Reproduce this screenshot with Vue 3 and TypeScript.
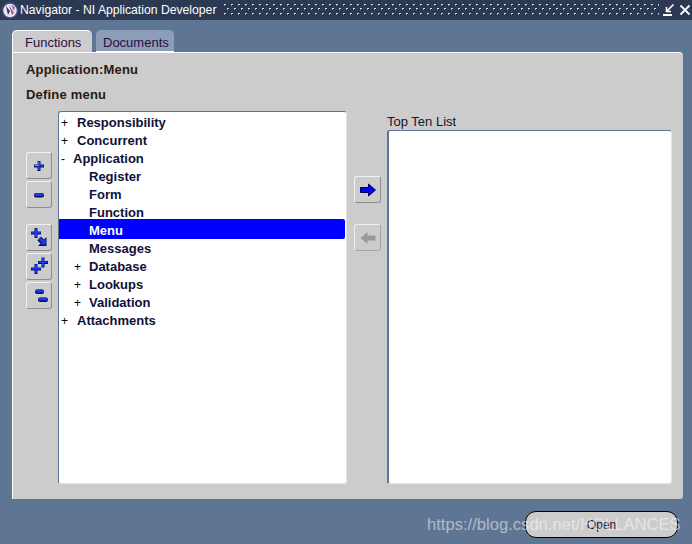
<script setup lang="ts">
interface Row { label: string; indent: number; mark: string; selected?: boolean }
const rows: Row[] = [
  { label: 'Responsibility', indent: 0, mark: '+' },
  { label: 'Concurrent', indent: 0, mark: '+' },
  { label: 'Application', indent: 0, mark: '-' },
  { label: 'Register', indent: 1, mark: '' },
  { label: 'Form', indent: 1, mark: '' },
  { label: 'Function', indent: 1, mark: '' },
  { label: 'Menu', indent: 1, mark: '', selected: true },
  { label: 'Messages', indent: 1, mark: '' },
  { label: 'Database', indent: 1, mark: '+' },
  { label: 'Lookups', indent: 1, mark: '+' },
  { label: 'Validation', indent: 1, mark: '+' },
  { label: 'Attachments', indent: 0, mark: '+' },
]
</script>

<template>
  <div class="app">
    <header class="titlebar">
      <svg class="logo" width="18" height="18" viewBox="0 0 18 18">
        <circle cx="9" cy="9.500" r="7.500" fill="#e6e6f2" stroke="#4a4a78" stroke-width="1.500" />
        <path d="M5 5 L9 10 L7 14 Z" fill="#3d2f86" />
        <path d="M8 4 L13 12 L11 14 Z" fill="#c04a78" />
        <path d="M10 4 L14 6 L13 10 Z" fill="#8a6cc0" />
      </svg>
      <span class="title">Navigator - NI Application Developer</span>
      <svg class="stipple" width="435" height="12">
        <defs>
          <pattern id="stip" width="7" height="9" patternUnits="userSpaceOnUse">
            <rect x="0" y="0" width="2" height="1" fill="#d5dbe4" />
            <rect x="0" y="1" width="1" height="1" fill="#8f9bb0" />
            <rect x="1" y="1" width="1" height="1" fill="#0c1424" />
            <rect x="3" y="4" width="2" height="1" fill="#d5dbe4" />
            <rect x="3" y="5" width="1" height="1" fill="#8f9bb0" />
            <rect x="4" y="5" width="1" height="1" fill="#0c1424" />
          </pattern>
        </defs>
        <rect width="435" height="12" fill="url(#stip)" />
      </svg>
      <svg class="winicon" width="14" height="14" viewBox="0 0 14 14">
        <path d="M10.500 1.500 L4 8 M3.500 4 V8.500 H8" stroke="#fff" stroke-width="1.600" fill="none" />
        <path d="M0 12 H9" stroke="#fff" stroke-width="2" />
      </svg>
      <svg class="winicon" width="12" height="12" viewBox="0 0 12 12">
        <path d="M1.500 1.500 L10.500 10.500 M10.500 1.500 L1.500 10.500" stroke="#fff" stroke-width="1.800" />
      </svg>
    </header>

    <main class="main">
      <nav class="tabs">
        <div class="tab active">Functions</div>
        <div class="tab">Documents</div>
      </nav>

      <section class="panel">
        <div class="heading first">Application:Menu</div>
        <div class="heading second">Define menu</div>

        <div class="workspace">
          <div class="toolcol">
            <button class="tool">
              <svg width="14" height="14" viewBox="0 0 14 14"><path class="sh" d="M5.500 2h3v3.500H12v3H8.500V12h-3V8.500H2v-3h3.500z" /><path class="bl" d="M6 2.500h2V6h3.500v1.500H8v3.500H6V7.500H2.500V6H6z" /><path class="hi" d="M6 6.500h-3M6 3v3" /></svg>
            </button>
            <button class="tool">
              <svg width="14" height="14" viewBox="0 0 14 14"><rect class="sh" x="2" y="5" width="10" height="4.500" rx="2" /><rect class="bl" x="2.500" y="5" width="9" height="3" rx="1.500" /></svg>
            </button>
            <button class="tool gap">
              <svg width="22" height="22" viewBox="0 0 22 22">
                <g transform="translate(1.500 -1)">
                  <path class="sh" d="M5 2h3v3.500h3.500v3H8V12H5V8.500H1.500v-3H5z" />
                  <path class="bl" d="M5.500 2.500h2V6H11v1.500H7.500V11h-2V7.500H2V6h3.500z" />
                </g>
                <path class="sh" d="M11 11.500l2-2 3 3 2.500-2.500v9h-8.500l2.500-2.500-3-3z" />
                <path class="bl" d="M11.800 11.700l1.200-1.200 3 3 1.800-1.800v5.800h-5.800l1.800-1.800-3-3z" />
              </svg>
            </button>
            <button class="tool">
              <svg width="22" height="22" viewBox="0 0 22 22">
                <g transform="translate(1 -.5)">
                  <path class="sh" d="M12.500 2h3v3.500H19v3h-3.500V12h-3V8.500H9v-3h3.500z" />
                  <path class="bl" d="M13 2.500h2V6h3.500v1.500H15V11h-2V7.500H9.500V6H13z" />
                </g>
                <g transform="translate(1.500 -1.500)">
                  <path class="sh" d="M5 9.500h3V13h3.500v3H8v3.500H5V16H1.500v-3H5z" />
                  <path class="bl" d="M5.500 10h2v3.500H11V15H7.500v3.500h-2V15H2v-1.500h3.500z" />
                </g>
              </svg>
            </button>
            <button class="tool">
              <svg width="22" height="22" viewBox="0 0 22 22">
                <rect class="sh" x="7" y="4.500" width="9" height="4.500" rx="2" />
                <rect class="bl" x="7.500" y="4.500" width="8" height="3" rx="1.500" />
                <rect class="sh" x="10" y="12.500" width="10" height="4.500" rx="2" />
                <rect class="bl" x="10.500" y="12.500" width="9" height="3" rx="1.500" />
              </svg>
            </button>
          </div>

          <div class="tree">
            <div
              v-for="row in rows"
              :key="row.label"
              class="row"
              :class="{ selected: row.selected, nested: row.indent === 1, expanded: row.mark === '-' }"
            >
              <span class="mark">{{ row.mark }}</span>
              <span class="label">{{ row.label }}</span>
            </div>
          </div>

          <div class="movecol">
            <button class="tool">
              <svg width="20" height="18" viewBox="0 0 20 18"><path fill="#0000ff" stroke="#000050" d="M2.500 6.500h8V3l7 6-7 6v-3.500h-8z" /></svg>
            </button>
            <button class="tool disabled">
              <svg width="20" height="18" viewBox="0 0 20 18"><path fill="#999" d="M17.500 6.500h-8V3l-7 6 7 6v-3.500h8z" /></svg>
            </button>
          </div>

          <div class="rightcol">
            <div class="listlabel">Top Ten List</div>
            <div class="list"></div>
          </div>
        </div>
      </section>

      <footer class="footer">
        <button class="open">Open</button>
      </footer>
    </main>
    <div class="watermark">https://blog.csdn.net/HOLLANCES</div>
  </div>
</template>

<style>
html, body { margin: 0; background: #5f7594; }
</style>

<style scoped>
.app {
  position: relative;
  width: 692px;
  height: 544px;
  overflow: hidden;
  display: flex;
  flex-direction: column;
  background: #5f7594;
  font-family: "Liberation Sans", Arial, sans-serif;
}
.titlebar {
  height: 20px;
  background: #2b3a52;
  display: flex;
  align-items: center;
  padding: 0 3px 0 1px;
  box-sizing: border-box;
  flex: none;
}
.logo { flex: none; }
.title {
  margin-left: 1px;
  color: #fff;
  font-size: 12.2px;
  white-space: nowrap;
  width: 204px;
  flex: none;
}
.stipple { flex: none; margin-right: 2px; }
.winicon { flex: none; margin-left: 2px; }
.main {
  flex: 1;
  display: flex;
  flex-direction: column;
  padding: 10px 9px 0 12px;
}
.tabs {
  display: flex;
  gap: 4px;
  height: 22px;
  flex: none;
  position: relative;
  z-index: 1;
}
.tab {
  box-sizing: border-box;
  width: 78px;
  height: 22px;
  padding: 5px 0 0 7px;
  font-size: 13px;
  line-height: 16px;
  color: #2a0f45;
  background: #8c9db8;
  border-radius: 5px 5px 0 0;
  border-bottom: 1px solid #fff;
}
.tab.active {
  width: 80px;
  padding: 4px 0 0 12px;
  background: #cccccc;
  border-top: 1px solid #fff;
  border-left: 1px solid #fff;
  border-bottom: none;
}
.panel {
  box-sizing: border-box;
  height: 447px;
  flex: none;
  background: #cccccc;
  border-left: 1px solid #fff;
  border-top: 1px solid #fff;
  border-radius: 0 4px 3px 0;
  padding: 0 10px 0 13px;
  display: flex;
  flex-direction: column;
}
.heading {
  font-size: 13px;
  font-weight: bold;
  color: #2b1a10;
  line-height: 14px;
  letter-spacing: .2px;
}
.heading.first { margin-top: 10px; }
.heading.second { margin-top: 11px; }
.workspace {
  display: flex;
  margin-top: 9px;
  height: 373px;
}
.toolcol {
  width: 26px;
  flex: none;
  display: flex;
  flex-direction: column;
  gap: 2px;
  padding-top: 41px;
}
.tool {
  box-sizing: border-box;
  width: 26px;
  height: 27px;
  padding: 0;
  background: #cccccc;
  border: 1px solid;
  border-color: #f2f2f2 #8d8d8d #8d8d8d #f2f2f2;
  border-radius: 3px;
  display: flex;
  align-items: center;
  justify-content: center;
}
.tool.gap { margin-top: 14px; }
.sh { fill: #001060; }
.bl { fill: #1a38e8; }
.hi { stroke: #a8b8f8; stroke-width: .8; fill: none; }
.tree {
  box-sizing: border-box;
  width: 289px;
  height: 373px;
  margin-left: 6px;
  flex: none;
  background: #fff;
  border: 1px solid #e4e4e4;
  border-left: 1px solid #5f7594;
  border-top: 1px solid #5f7594;
  border-radius: 3px;
  padding-top: 2px;
  display: flex;
  flex-direction: column;
}
.row {
  height: 18px;
  line-height: 18px;
  display: flex;
  font-size: 13px;
  color: #101038;
  font-weight: bold;
  white-space: nowrap;
}
.mark {
  width: 16px;
  margin-left: 2px;
  flex: none;
  font-size: 12px;
  font-weight: normal;
  color: #000;
}
.row.expanded .mark { width: 12px; }
.row.nested .mark { margin-left: 15px; width: 15px; }
.row.selected {
  background: #0000ff;
  color: #fff;
  height: 20px;
  line-height: 24px;
  margin: -3px 1px 1px 0;
  border-radius: 0 2px 2px 0;
}
.movecol {
  width: 27px;
  flex: none;
  margin-left: 7px;
  display: flex;
  flex-direction: column;
  gap: 21px;
  padding-top: 65px;
}
.movecol .tool { width: 27px; }
.tool.disabled { border-color: #ededed #a5a5a5 #a5a5a5 #ededed; }
.rightcol {
  margin-left: 6px;
  width: 285px;
  flex: none;
  display: flex;
  flex-direction: column;
}
.listlabel {
  height: 19px;
  line-height: 22px;
  font-size: 13px;
  color: #1a1030;
}
.list {
  flex: 1;
  box-sizing: border-box;
  background: #fff;
  border: 1px solid #e4e4e4;
  border-left: 2px solid #5f7594;
  border-top: 1px solid #5f7594;
  border-radius: 3px;
}
.footer {
  display: flex;
  justify-content: flex-end;
  padding: 12px 5px 0 0;
}
.open {
  box-sizing: border-box;
  width: 153px;
  height: 27px;
  background: #cccccc;
  border: 1px solid #000;
  border-radius: 11px;
  font: 12px "Liberation Sans", Arial, sans-serif;
  color: #1a1030;
  padding: 0;
}
.watermark {
  position: absolute;
  left: 427px;
  top: 515px;
  font-size: 16.6px;
  line-height: 20px;
  white-space: nowrap;
  color: rgba(255, 255, 255, .5);
}
</style>
